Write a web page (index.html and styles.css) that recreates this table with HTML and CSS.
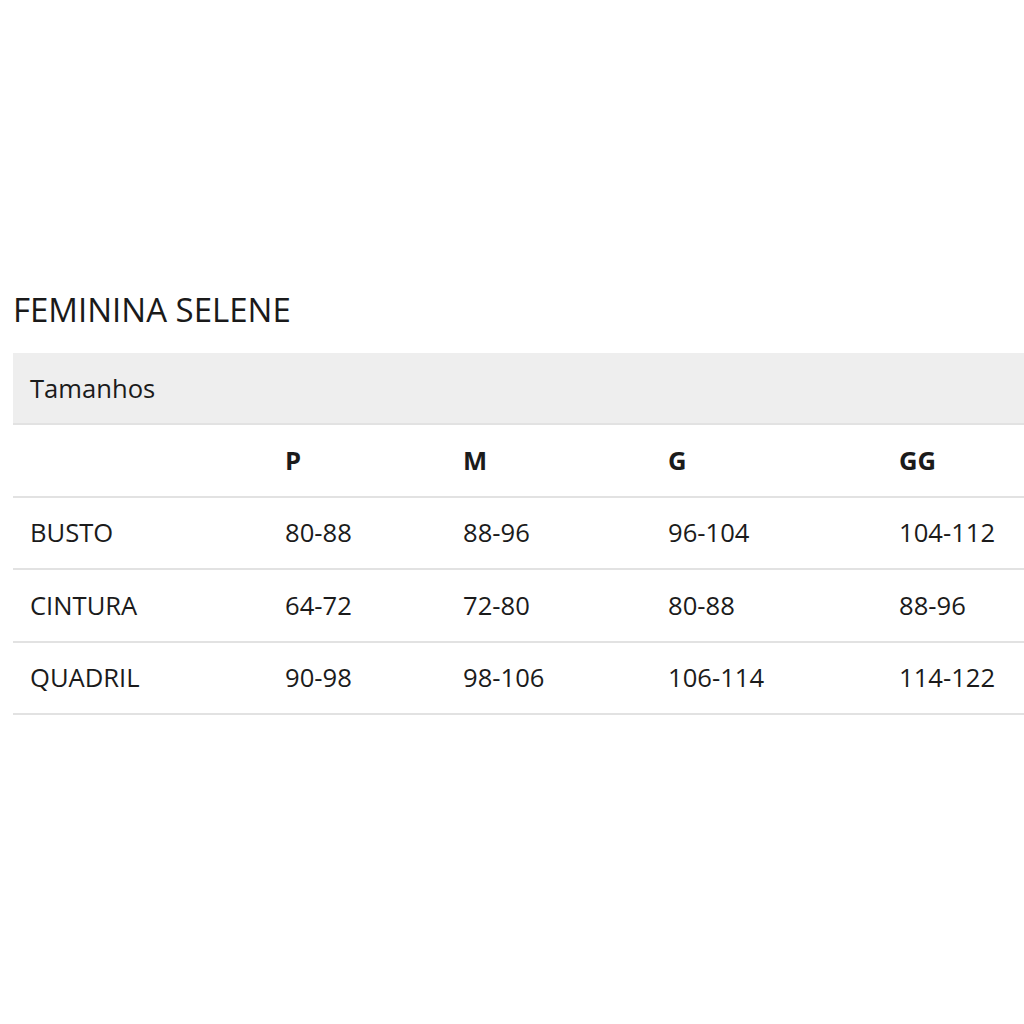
FILE: index.html
```html
<!DOCTYPE html>
<html lang="pt">
<head>
<meta charset="utf-8">
<title>Feminina Selene</title>
<link rel="stylesheet" href="styles.css">
</head>
<body>
<main class="page">
  <h1 class="title">FEMININA SELENE</h1>
  <table class="sizes">
    <colgroup>
      <col class="c-label"><col class="c-p"><col class="c-m"><col class="c-g"><col class="c-gg">
    </colgroup>
    <thead>
      <tr class="band"><th colspan="5">Tamanhos</th></tr>
    </thead>
    <tbody>
      <tr class="head"><td></td><td>P</td><td>M</td><td>G</td><td>GG</td></tr>
      <tr><td>BUSTO</td><td>80-88</td><td>88-96</td><td>96-104</td><td>104-112</td></tr>
      <tr><td>CINTURA</td><td>64-72</td><td>72-80</td><td>80-88</td><td>88-96</td></tr>
      <tr><td>QUADRIL</td><td>90-98</td><td>98-106</td><td>106-114</td><td>114-122</td></tr>
    </tbody>
  </table>
</main>
</body>
</html>
```
FILE: styles.css
```css
html, body {
  margin: 0;
  padding: 0;
  background: #fff;
}
body {
  font-family: "Open Sans", "Noto Sans", sans-serif;
  color: #1b1b1b;
}
.page {
  padding: 289px 0 0 13px;
}
.title {
  margin: 0 0 22px 0;
  font-size: 33px;
  font-weight: 400;
  line-height: 42px;
  color: #1a1a1a;
}
.sizes {
  border-collapse: collapse;
  table-layout: fixed;
  width: 1011px;
  font-size: 25.6px;
}
.c-label { width: 255px; }
.c-p { width: 178px; }
.c-m { width: 205px; }
.c-g { width: 231px; }
.c-gg { width: 142px; }
.sizes th,
.sizes td {
  text-align: left;
  padding: 0 0 0 17px;
  height: 70.5px;
  border-bottom: 2px solid #e2e2e2;
  font-weight: 400;
  white-space: nowrap;
}
.band th {
  background: #eeeeee;
  height: 70px;
}
.head td {
  font-weight: 700;
}
```
